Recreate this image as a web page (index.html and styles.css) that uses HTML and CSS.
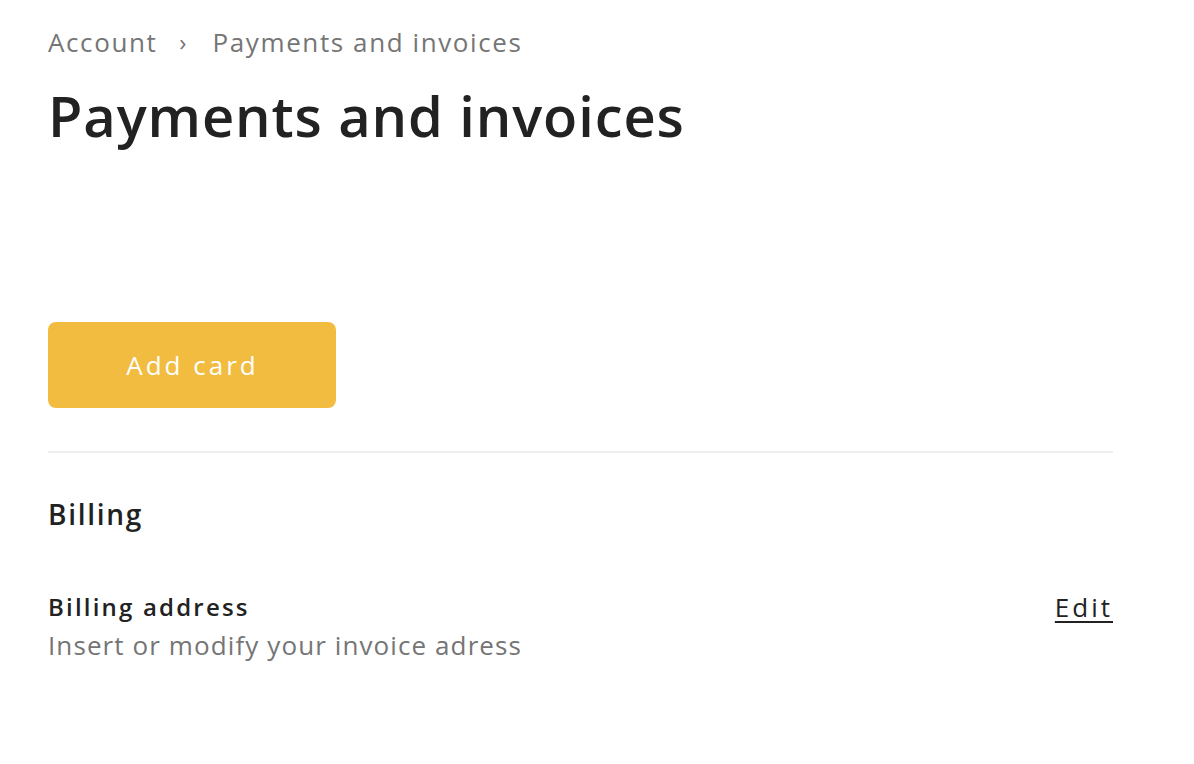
FILE: index.html
```html
<!DOCTYPE html>
<html>
<head>
  <title>Payments and invoices</title>
  <link rel="stylesheet" href="styles.css">
</head>
<body>
  <div class="page">
    <nav class="crumbs">
      <span>Account</span>
      <span class="sep">›</span>
      <span>Payments and invoices</span>
    </nav>
    <h1>Payments and invoices</h1>

    <div class="cards">
      <button class="add-card">Add card</button>
    </div>

    <section class="billing">
      <h2>Billing</h2>
      <div class="row">
        <div>
          <div class="row-title">Billing address</div>
          <div class="row-desc">Insert or modify your invoice adress</div>
        </div>
        <a href="#" class="edit">Edit</a>
      </div>
    </section>
  </div>
</body>
</html>
```

FILE: styles.css
```css
body {
  margin: 0;
  font-family: "Open Sans", "Noto Sans", sans-serif;
  color: #222;
  background: #fff;
}
.page {
  width: 1065px;
  padding: 26px 48px;
}
.crumbs {
  display: flex;
  gap: 22px;
  font-size: 26px;
  line-height: 32px;
  letter-spacing: 1.6px;
  color: #757575;
}
.crumbs .sep { font-size: 24px; letter-spacing: 0; padding-right: 4px; }
h1 {
  margin: 25px 0 0;
  font-size: 56px;
  line-height: 64px;
  font-weight: 600;
  letter-spacing: 0.9px;
  color: #222;
}
.cards { padding-top: 175px; padding-bottom: 43px; border-bottom: 2px solid #eee; }
.add-card {
  display: block;
  width: 288px;
  height: 86px;
  border: none;
  border-radius: 8px;
  background: #f2bc40;
  color: #fff;
  font-family: inherit;
  font-size: 26px;
  letter-spacing: 3px;
  text-indent: 1px;
}
.billing h2 {
  margin: 43px 0 0;
  font-size: 28px;
  line-height: 36px;
  font-weight: 600;
  letter-spacing: 1.7px;
}
.row {
  display: flex;
  justify-content: space-between;
  margin-top: 60px;
}
.row-title { font-size: 24px; line-height: 30px; font-weight: 600; letter-spacing: 2.2px; }
.row-desc { font-size: 26px; line-height: 30px; color: #757575; margin-top: 8px; letter-spacing: 1.1px; }
.edit {
  font-size: 26px;
  line-height: 30px;
  color: #222;
  letter-spacing: 3px;
  text-decoration-thickness: 2px;
  text-underline-offset: 4px;
}
```
